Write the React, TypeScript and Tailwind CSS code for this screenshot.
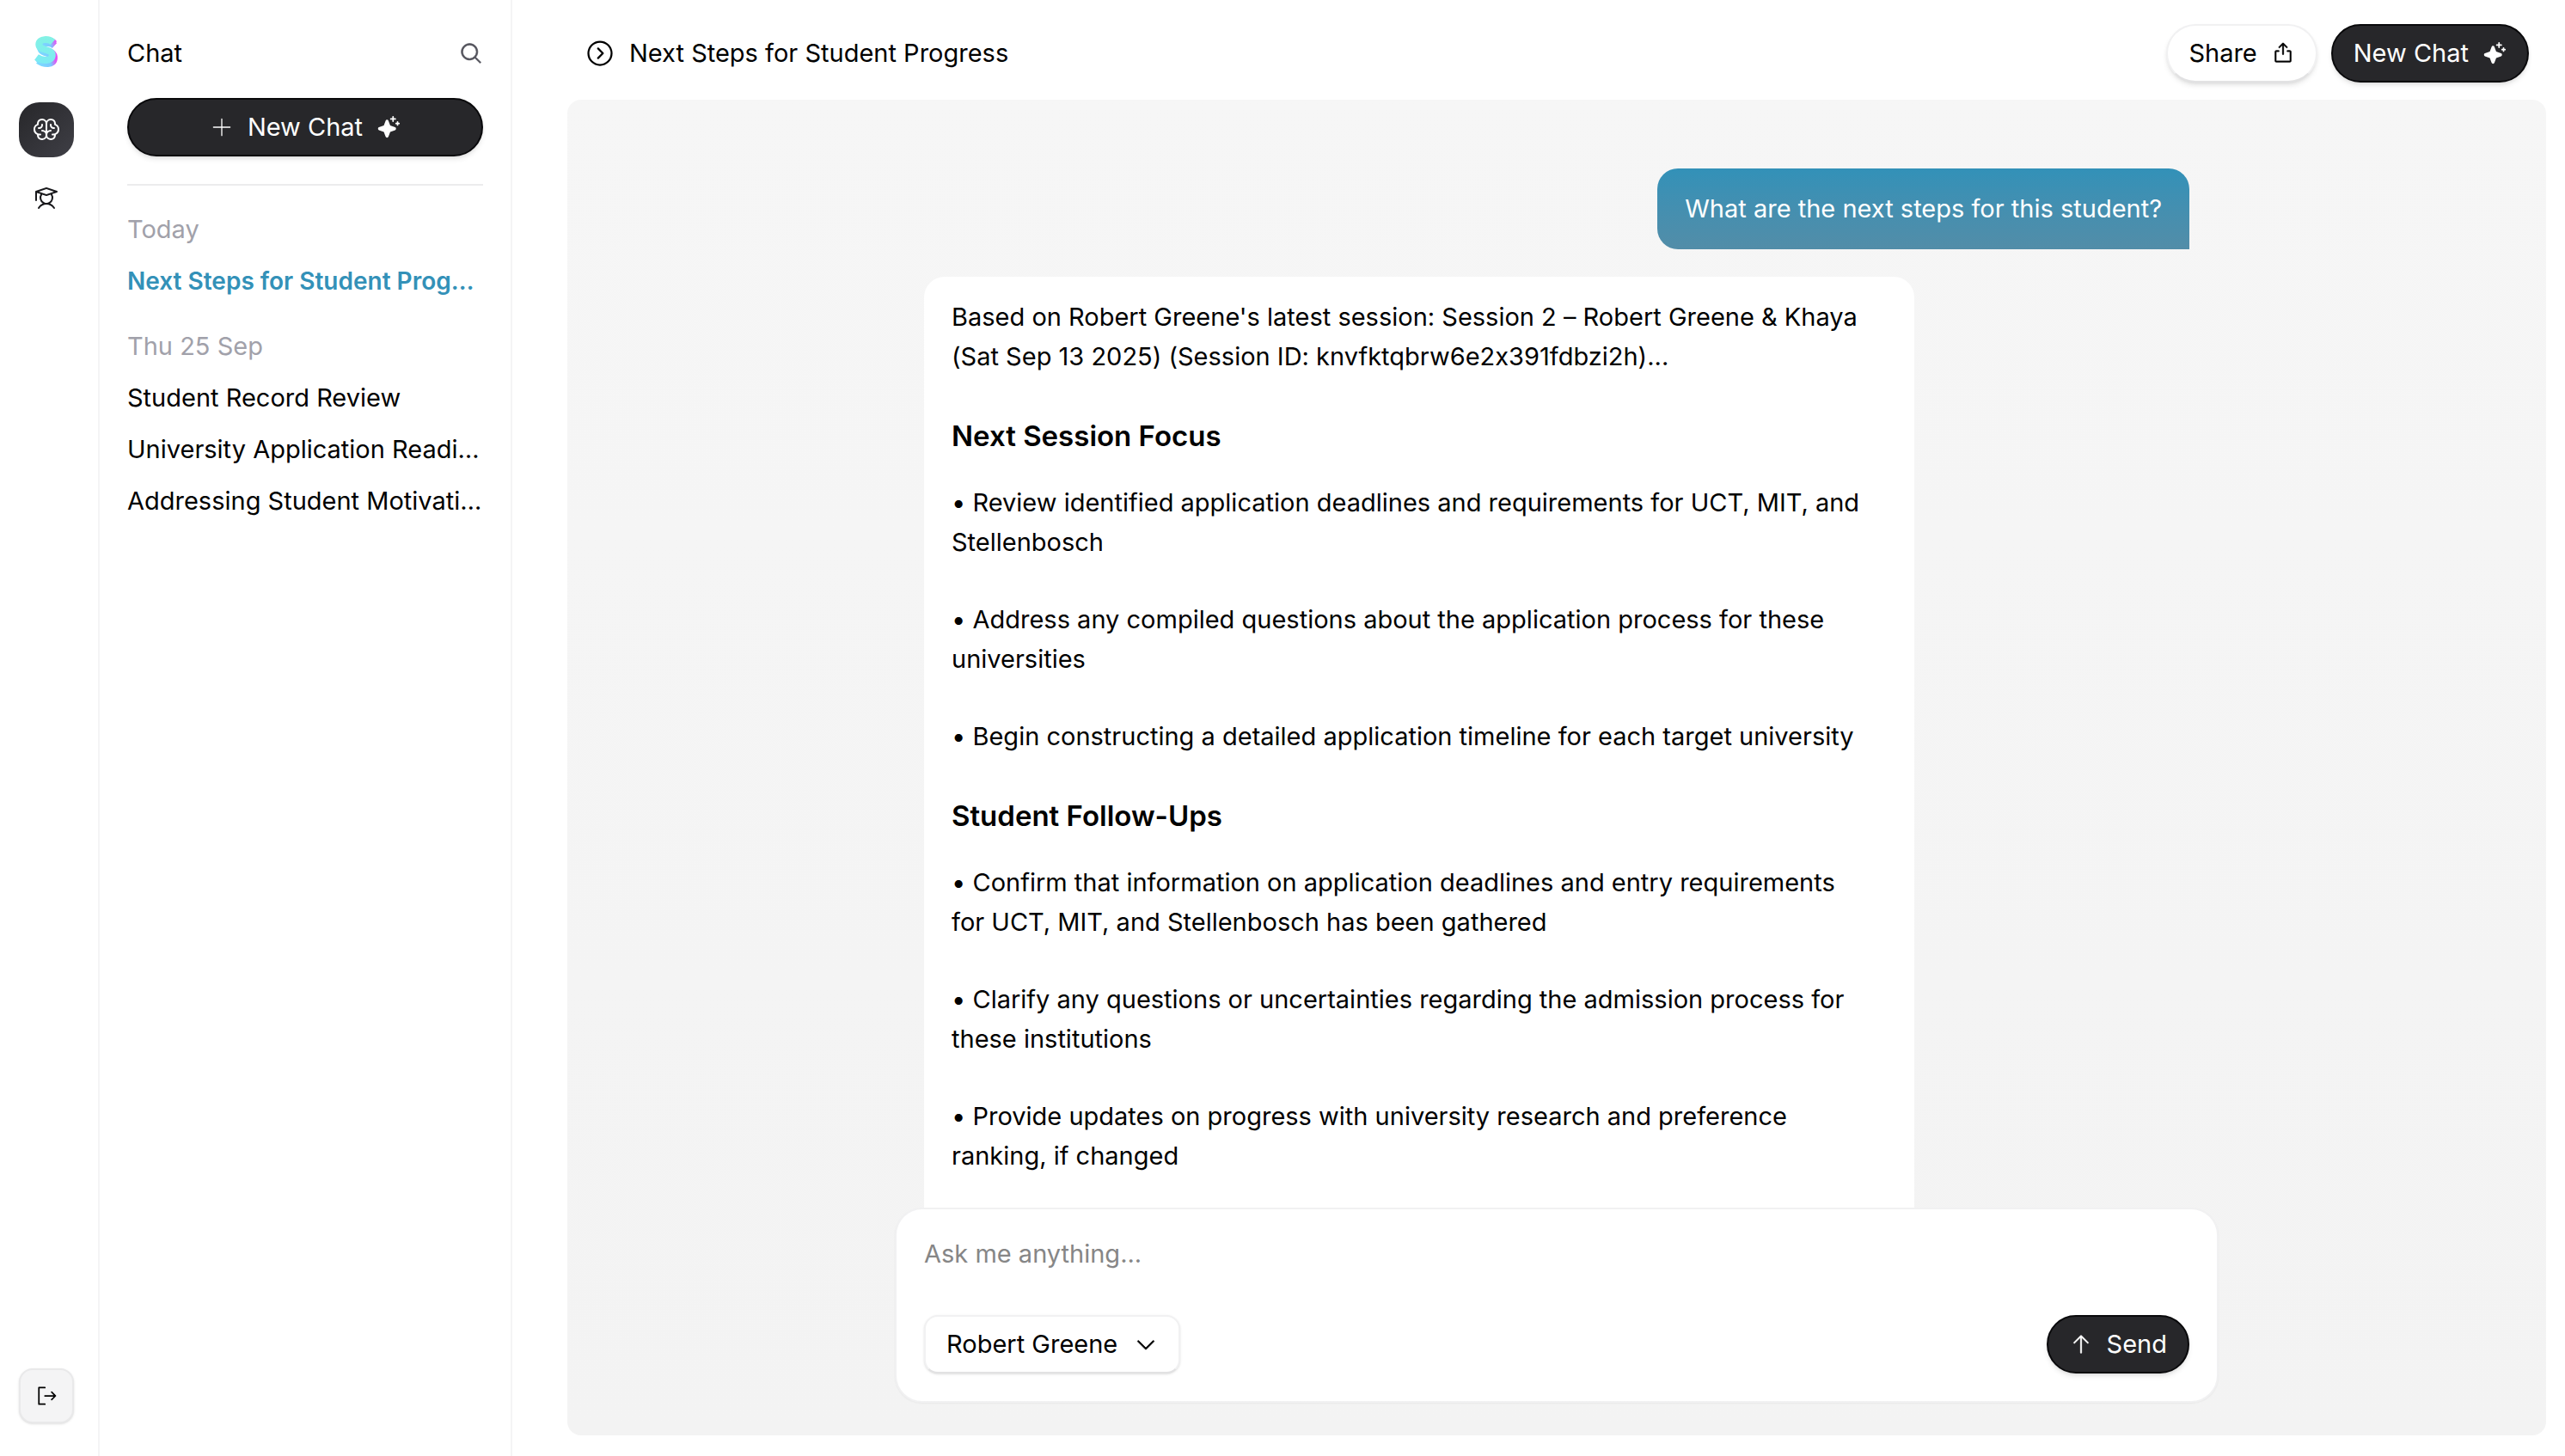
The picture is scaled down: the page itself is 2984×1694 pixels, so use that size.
import type { ReactNode } from "react";
import {
  PiArrowUp,
  PiBrain,
  PiCaretCircleRight,
  PiCaretDown,
  PiExport,
  PiMagnifyingGlass,
  PiPlusLight,
  PiSignOut,
  PiSparkleFill,
  PiStudent,
} from "react-icons/pi";

const history = [
  { label: "Today", items: [{ title: "Next Steps for Student Prog…", active: true }] },
  {
    label: "Thu 25 Sep",
    items: [
      { title: "Student Record Review", active: false },
      { title: "University Application Readi…", active: false },
      { title: "Addressing Student Motivati…", active: false },
    ],
  },
];

const sections = [
  {
    heading: "Next Session Focus",
    bullets: [
      "Review identified application deadlines and requirements for UCT, MIT, and Stellenbosch",
      "Address any compiled questions about the application process for these universities",
      "Begin constructing a detailed application timeline for each target university",
    ],
  },
  {
    heading: "Student Follow-Ups",
    bullets: [
      "Confirm that information on application deadlines and entry requirements for UCT, MIT, and Stellenbosch has been gathered",
      "Clarify any questions or uncertainties regarding the admission process for these institutions",
      "Provide updates on progress with university research and preference ranking, if changed",
    ],
  },
];

const S_CURVE = "M21.5 8C17 4 5.5 3.5 5.3 10.5C5.3 18.5 20.8 15.5 20.8 23C20.8 31 8.5 30 2.5 25.5";

function Logo() {
  return (
    <svg viewBox="0 0 28 40" className="h-10 w-7" fill="none" strokeWidth="8" role="img" aria-label="Home">
      <defs>
        <linearGradient id="logo-depth" x1="2" y1="0" x2="26" y2="0" gradientUnits="userSpaceOnUse">
          <stop offset="0" stopColor="#7cdcff" />
          <stop offset="0.65" stopColor="#7cc8ff" />
          <stop offset="0.88" stopColor="#e056f5" />
          <stop offset="1" stopColor="#f03ff0" />
        </linearGradient>
        <linearGradient id="logo-face" x1="0" y1="0" x2="0" y2="32" gradientUnits="userSpaceOnUse">
          <stop offset="0" stopColor="#84f2e4" />
          <stop offset="1" stopColor="#7cebf2" />
        </linearGradient>
      </defs>
      <g stroke="url(#logo-depth)">
        <path d={S_CURVE} transform="translate(2 5)" />
        <path d={S_CURVE} transform="translate(2 3)" />
        <path d={S_CURVE} transform="translate(1 2)" />
      </g>
      <path d={S_CURVE} transform="translate(0 1)" stroke="url(#logo-face)" />
    </svg>
  );
}

function DarkButton({ className = "", children }: { className?: string; children: ReactNode }) {
  return (
    <button
      type="button"
      className={`flex h-17 items-center justify-center gap-4 rounded-full border-2 border-[#09090b] bg-[#27272a] px-6 text-white shadow-md ${className}`}
    >
      {children}
    </button>
  );
}

function Rail() {
  return (
    <nav aria-label="Main" className="flex w-29 shrink-0 flex-col items-start border-r-2 border-[#f4f4f5] px-[22px] pt-10 pb-[38px]">
      <a href="#home" className="flex h-10 w-16 items-center justify-center">
        <Logo />
      </a>
      <a
        href="#assistant"
        aria-label="Assistant"
        className="mt-[39px] flex size-16 items-center justify-center rounded-3xl bg-linear-to-br from-[#27272a] to-[#3f3f46] text-white"
      >
        <PiBrain className="size-8" />
      </a>
      <a href="#students" aria-label="Students" className="mt-4 flex size-16 items-center justify-center text-[#18181b]">
        <PiStudent className="size-8" />
      </a>
      <button
        type="button"
        aria-label="Sign out"
        className="mt-auto flex size-16 items-center justify-center rounded-2xl border-2 border-[#e9e9ea] bg-[#f4f4f5] shadow-sm"
      >
        <PiSignOut className="size-7" />
      </button>
    </nav>
  );
}

function Sidebar() {
  return (
    <aside className="flex w-120 shrink-0 flex-col border-r-2 border-[#f4f4f5] px-8 pt-10">
      <div className="flex h-11 items-center justify-between">
        <h2>Chat</h2>
        <button type="button" aria-label="Search chats" className="text-[#52525b]">
          <PiMagnifyingGlass className="size-7 stroke-current stroke-[6px]" />
        </button>
      </div>
      <DarkButton className="mt-[30px] w-full">
        <PiPlusLight className="size-7" />
        New Chat
        <PiSparkleFill className="size-7" />
      </DarkButton>
      <hr className="mt-8 border-t-2 border-[#ececed]" />
      <div className="mt-[29px] flex flex-col gap-8">
        {history.map((group) => (
          <section key={group.label} className="flex flex-col gap-4">
            <h3 className="leading-11 text-[#a1a1aa]">{group.label}</h3>
            {group.items.map((item) => (
              <a
                key={item.title}
                href="#chat"
                className={
                  item.active
                    ? "text-[28px] leading-11 font-semibold whitespace-nowrap text-[#3391b8]"
                    : "leading-11 whitespace-nowrap"
                }
              >
                {item.title}
              </a>
            ))}
          </section>
        ))}
      </div>
    </aside>
  );
}

function Composer() {
  return (
    <form className="mx-auto w-full max-w-[1540px] rounded-[32px] border-2 border-[#f1f1f2] bg-white p-8 shadow-xs">
      <textarea
        aria-label="Message"
        placeholder="Ask me anything..."
        className="block h-[91px] w-full resize-none leading-10 outline-none placeholder:text-[#868686]"
      />
      <div className="flex items-center justify-between">
        <label className="relative flex items-center">
          <select
            aria-label="Student"
            className="h-17 w-[298px] appearance-none rounded-2xl border-2 border-[#f1f1f2] border-b-[#e2e2e3] bg-white pr-16 pl-6 shadow-sm"
          >
            <option>Robert Greene</option>
          </select>
          <PiCaretDown className="pointer-events-none absolute right-[26px] size-7 stroke-current stroke-[6px]" />
        </label>
        <DarkButton>
          <PiArrowUp className="size-7 stroke-current stroke-[3px]" />
          Send
        </DarkButton>
      </div>
    </form>
  );
}

function Conversation() {
  return (
    <div className="mx-auto flex min-h-0 w-full max-w-[1472px] flex-1 flex-col gap-8 overflow-hidden pt-20">
      <p className="self-end rounded-3xl rounded-br-none bg-linear-to-b from-[#3291b8] to-[#528da8] px-8 py-6 leading-[46px] text-white">
        What are the next steps for this student?
      </p>
      <article className="w-full max-w-6xl flex-1 rounded-t-3xl bg-white pt-6 pr-14 pl-8 leading-[46px]">
        <p>
          Based on Robert Greene's latest session: Session 2 – Robert Greene &amp; Khaya
          <br />
          (Sat Sep 13 2025) (Session ID: knvfktqbrw6e2x391fdbzi2h)...
        </p>
        {sections.map((section) => (
          <section key={section.heading}>
            <h3 className="mt-[46px] mb-8 text-[33px] leading-[46px] font-semibold">{section.heading}</h3>
            <div className="flex flex-col gap-[44px]">
              {section.bullets.map((bullet) => (
                <p key={bullet}>{`• ${bullet}`}</p>
              ))}
            </div>
          </section>
        ))}
      </article>
    </div>
  );
}

export default function App() {
  return (
    <div className="flex h-screen bg-white font-['Inter',sans-serif] text-[29px] leading-11 text-black [font-variant-ligatures:no-contextual]">
      <Rail />
      <Sidebar />
      <main className="flex min-w-0 flex-1 flex-col pr-[22px] pb-6 pl-16">
        <header className="flex h-29 shrink-0 items-center justify-between pt-2 pr-5 pl-5">
          <div className="flex items-center gap-4">
            <PiCaretCircleRight className="size-9" />
            <h1>Next Steps for Student Progress</h1>
          </div>
          <div className="flex gap-4">
            <button
              type="button"
              className="flex h-17 items-center gap-4 rounded-full border-2 border-[#f1f1f2] border-b-[#e2e2e3] bg-white px-6 shadow-md"
            >
              Share
              <PiExport className="size-7 stroke-current stroke-[3px]" />
            </button>
            <DarkButton>
              New Chat
              <PiSparkleFill className="size-7" />
            </DarkButton>
          </div>
        </header>
        <div className="flex min-h-0 flex-1 flex-col rounded-2xl bg-linear-to-b from-[#f6f6f6] to-[#f3f3f3] pb-[38px]">
          <Conversation />
          <Composer />
        </div>
      </main>
    </div>
  );
}
